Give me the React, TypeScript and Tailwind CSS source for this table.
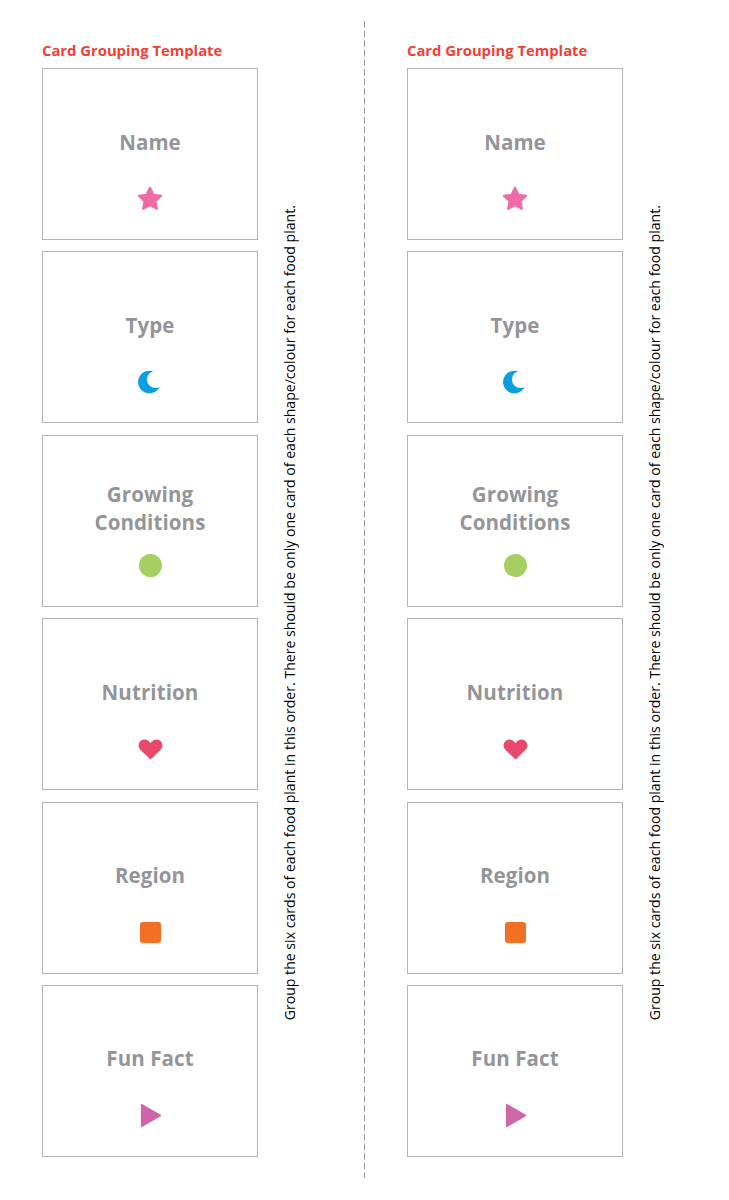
import React from 'react';

type CardDef = {
  label: string[];
  icon: React.ReactNode;
};

const Star = () => (
  <svg width="28" height="28" viewBox="0 0 24 24">
    <path
      d="M12 2.4l2.9 6 6.6.9-4.8 4.6 1.2 6.6L12 17.3l-5.9 3.2 1.2-6.6-4.8-4.6 6.6-.9z"
      fill="#f06aa6"
      stroke="#f06aa6"
      strokeWidth="1.8"
      strokeLinejoin="round"
    />
  </svg>
);

const Moon = () => (
  <svg width="26" height="26" viewBox="0 0 24 24">
    <circle cx="11.5" cy="12" r="10.5" fill="#0ba0dd" />
    <circle cx="17.2" cy="9.6" r="8" fill="#ffffff" />
  </svg>
);

const Dot = () => <div className="w-[23px] h-[23px] rounded-full bg-[#a5cf63]" />;

const Heart = () => (
  <svg width="27" height="24" viewBox="0 0 27 24">
    <path
      d="M13.5 22.5L3.6 13C.6 10 1 5.2 4.6 3.3c2.8-1.5 6.2-.6 8.9 2.7 2.7-3.3 6.1-4.2 8.9-2.7C26 5.2 26.4 10 23.4 13z"
      fill="#e8496b"
    />
  </svg>
);

const Square = () => <div className="w-[21px] h-[21px] rounded-[3px] bg-[#f26f23]" />;

const Play = () => (
  <svg width="23" height="25" viewBox="0 0 22 24">
    <path d="M2.5 1.5L20.5 12 2.5 22.5z" fill="#cf66a8" stroke="#cf66a8" strokeWidth="1.5" strokeLinejoin="round" />
  </svg>
);

const cards: CardDef[] = [
  { label: ['Name'], icon: <Star /> },
  { label: ['Type'], icon: <Moon /> },
  { label: ['Growing', 'Conditions'], icon: <Dot /> },
  { label: ['Nutrition'], icon: <Heart /> },
  { label: ['Region'], icon: <Square /> },
  { label: ['Fun Fact'], icon: <Play /> },
];

function Card({ card }: { card: CardDef }) {
  return (
    <div className="w-[216px] h-[172px] border-[1.5px] border-[#b3b3b3] flex flex-col items-center">
      {/* label block centred around y+74 */}
      <div className="h-[115px] flex flex-col items-center justify-center pt-[30px]">
        {card.label.map((line) => (
          <div
            key={line}
            className="text-[20.5px] leading-[28px] font-bold text-[#939598] tracking-[0.1px]"
          >
            {line}
          </div>
        ))}
      </div>
      <div className="h-[30px] flex items-center justify-center">{card.icon}</div>
    </div>
  );
}

function Panel() {
  return (
    <div className="w-[364px] flex pl-[42px]">
      <div className="flex flex-col pt-[40px]">
        <h2 className="text-[14.8px] leading-[20px] font-bold text-[#ef4136]">
          Card Grouping Template
        </h2>
        <div className="mt-[8px] flex flex-col gap-[11.4px]">
          {cards.map((c) => (
            <Card key={c.label.join(' ')} card={c} />
          ))}
        </div>
      </div>
      <div className="ml-[23px] pt-[68px] flex items-center h-[1157px]">
        <p className="[writing-mode:vertical-rl] rotate-180 text-[14.1px] leading-[18px] text-black whitespace-nowrap">
          Group the six cards of each food plant in this order. There should be only one card of each
          shape/colour for each food plant.
        </p>
      </div>
    </div>
  );
}

export default function App() {
  return (
    <div
      className="w-[729px] h-[1200px] bg-white flex"
      style={{ fontFamily: '"Open Sans", "Liberation Sans", sans-serif' }}
    >
      <Panel />
      <div className="mt-[21px] h-[1157px] w-px bg-[linear-gradient(to_bottom,#9a9a9a_65%,transparent_65%)] bg-[length:1px_9.6px]" />
      <Panel />
    </div>
  );
}
